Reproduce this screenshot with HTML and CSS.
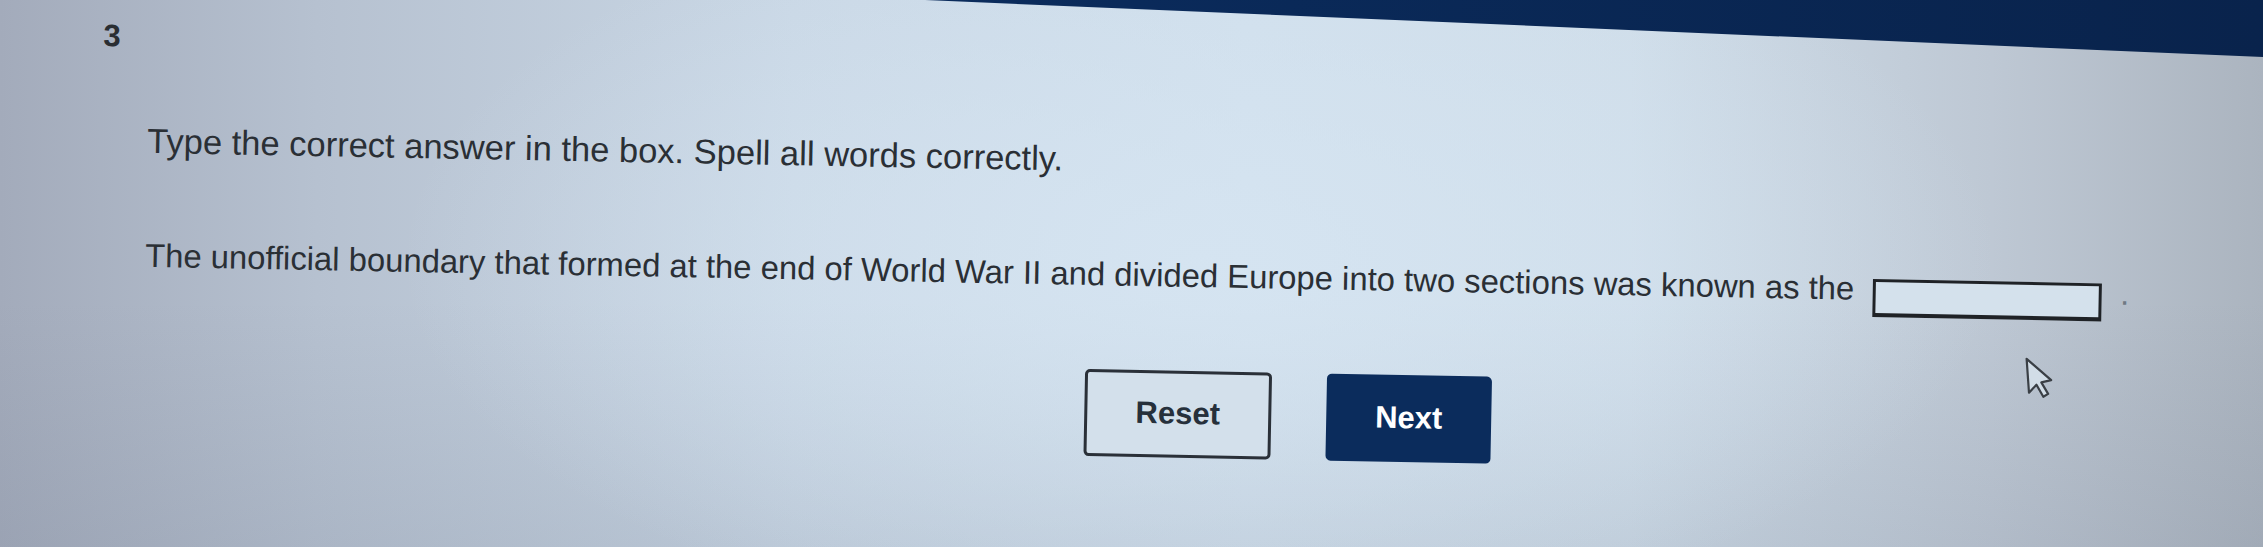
FILE: index.html
```html
<!DOCTYPE html>
<html lang="en">
<head>
<meta charset="utf-8">
<title>Question 3</title>
<link rel="stylesheet" href="styles.css">
</head>
<body>
<div class="band"></div>
<main class="page">
  <div class="qnum">3</div>
  <div class="content">
    <p class="prompt">Type the correct answer in the box. Spell all words correctly.</p>
    <p class="question">The unofficial boundary that formed at the end of World War II and divided Europe into two sections was known as the<span class="answer" role="textbox" aria-label="answer"></span><span class="dot">.</span></p>
    <div class="actions">
      <button class="btn btn-reset" type="button">Reset</button>
      <button class="btn btn-next" type="button">Next</button>
    </div>
  </div>
</main>
<svg class="cursor" width="28" height="44" viewBox="0 0 28 44" aria-hidden="true">
  <path d="M3 2 L3 36 L11 28.5 L17 41 L22 38.5 L16 26.5 L26 25 Z" fill="#d2dde7" stroke="#3a3f45" stroke-width="2.2" stroke-linejoin="round"/>
</svg>
</body>
</html>
```

FILE: styles.css
```css
html, body {
  margin: 0;
  padding: 0;
}

body {
  width: 2263px;
  height: 547px;
  overflow: hidden;
  position: relative;
  font-family: "Liberation Sans", Arial, sans-serif;
  color: #2a2f35;
  background:
    radial-gradient(ellipse 800px 380px at 1200px 260px, rgba(214, 229, 242, 0.85) 0%, rgba(214, 229, 242, 0) 100%),
    linear-gradient(180deg, rgba(0, 0, 0, 0) 55%, rgba(110, 120, 140, 0.16) 100%),
    linear-gradient(90deg, #a3abbb 0%, #b6c1d0 14%, #c9d7e5 35%, #d0dfec 55%, #cfdde9 72%, #bec8d4 88%, #abb4bf 100%);
}

.band {
  position: absolute;
  inset: 0;
  background: linear-gradient(90deg, #0f3366 0%, #0a2a5a 50%, #09234c 100%);
  clip-path: polygon(925px 0, 2263px 0, 2263px 57px);
}

.page {
  padding: 16.7px 0 0 104px;
  transform: rotate(1.1deg);
  transform-origin: 0 0;
}

.qnum {
  font-weight: 700;
  font-size: 31px;
  line-height: 33px;
  height: 33px;
  color: #2a2e33;
}

.content {
  padding-left: 46px;
}

.prompt {
  margin: 71px 0 0;
  font-size: 34.5px;
  line-height: 34.5px;
  white-space: nowrap;
}

.question {
  margin: 81.5px 0 0;
  font-size: 32.8px;
  line-height: 32.8px;
  white-space: nowrap;
}

.answer {
  display: inline-block;
  box-sizing: border-box;
  width: 229px;
  height: 38px;
  margin-left: 19px;
  vertical-align: -17px;
  border: 3px solid #1f2226;
  border-bottom-width: 4px;
  background: #d4e1ec;
}

.dot {
  margin-left: 18px;
  color: #6f7983;
}

.actions {
  display: flex;
  gap: 55px;
  margin-top: 67px;
  padding-left: 942px;
}

.btn {
  font-family: "Liberation Sans", Arial, sans-serif;
  font-weight: 700;
  font-size: 31px;
  height: 87px;
  padding: 0;
  border-radius: 5px;
  box-sizing: border-box;
}

.btn-reset {
  width: 187px;
  border: 3px solid #2a3038;
  background: #d3e0eb;
  color: #26303b;
}

.btn-next {
  width: 165px;
  border: none;
  background: #0b2c5c;
  color: #ffffff;
}

.cursor {
  position: absolute;
  left: 2025px;
  top: 356px;
  transform: rotate(-4deg);
}
```
